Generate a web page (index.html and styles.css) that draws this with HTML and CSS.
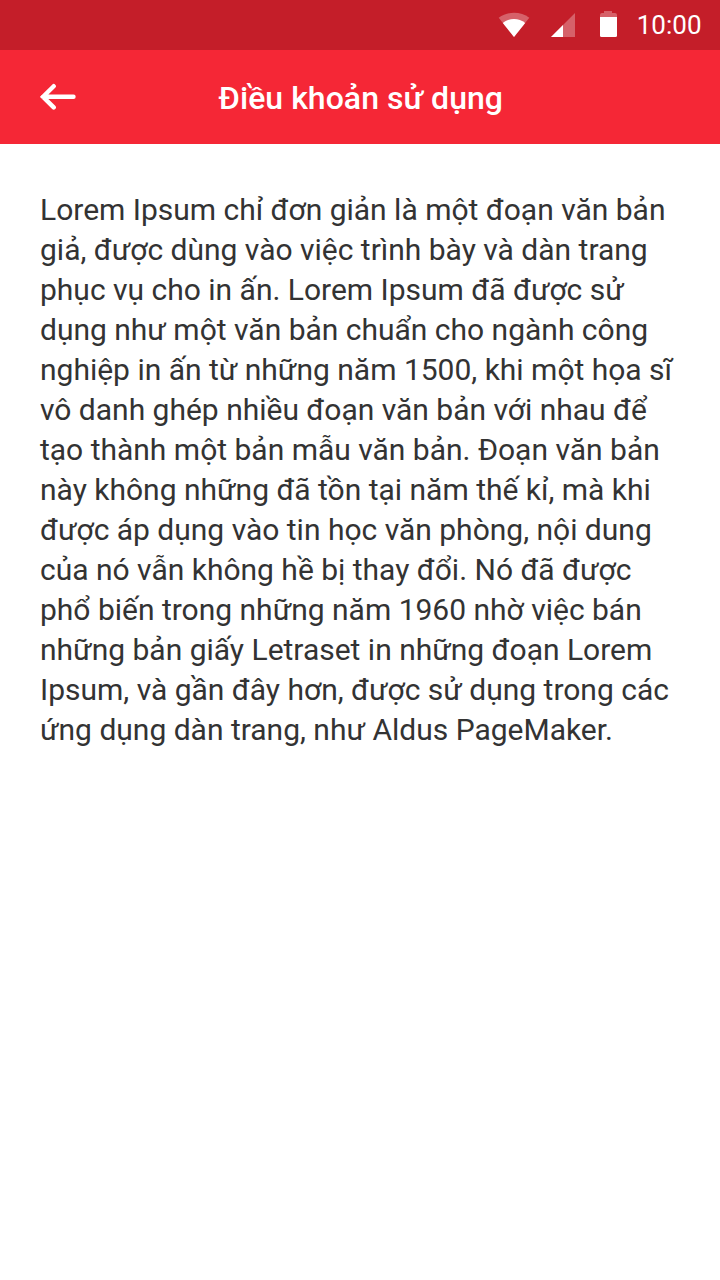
FILE: index.html
```html
<!DOCTYPE html>
<html lang="vi">
<head>
<meta charset="utf-8">
<title>Điều khoản sử dụng</title>
<link rel="stylesheet" href="styles.css">
</head>
<body>
<div class="status-bar">
  <svg class="status-icons" width="120" height="50" viewBox="498 0 120 50">
    <path class="dim" d="M514 37L498.700 17.800C503 14.500 508.500 12.800 514 12.800S525 14.500 529.300 17.800Z"/>
    <path class="solid" d="M514 37L502.800 23C506 20.300 510 19 514 19S522 20.300 525.200 23Z"/>
    <path class="dim" d="M551 37L575 13V37Z"/>
    <path class="solid" d="M551 37L563 25V37Z"/>
    <path class="dim" d="M604 11H612V13H615Q617 13 617 15V17H600V15Q600 13 602 13H604Z"/>
    <path class="solid" d="M600 17H617V35.500Q617 37 615.500 37H601.500Q600 37 600 35.500Z"/>
  </svg>
  <span class="clock">10:00</span>
</div>
<header class="app-bar">
  <svg class="back" width="36" height="28" viewBox="0 0 36 28">
    <path d="M13.700 3.200L3 13.800L13.700 24.400M3 13.800H33.500"/>
  </svg>
  <h1 class="title">Điều khoản sử dụng</h1>
</header>
<main class="terms">
  <p>Lorem Ipsum chỉ đơn giản là một đoạn văn bản<br>giả, được dùng vào việc trình bày và dàn trang<br>phục vụ cho in ấn. Lorem Ipsum đã được sử<br>dụng như một văn bản chuẩn cho ngành công<br>nghiệp in ấn từ những năm 1500, khi một họa sĩ<br>vô danh ghép nhiều đoạn văn bản với nhau để<br>tạo thành một bản mẫu văn bản. Đoạn văn bản<br>này không những đã tồn tại năm thế kỉ, mà khi<br>được áp dụng vào tin học văn phòng, nội dung<br>của nó vẫn không hề bị thay đổi. Nó đã được<br>phổ biến trong những năm 1960 nhờ việc bán<br>những bản giấy Letraset in những đoạn Lorem<br>Ipsum, và gần đây hơn, được sử dụng trong các<br>ứng dụng dàn trang, như Aldus PageMaker.</p>
</main>
</body>
</html>
```
FILE: styles.css
```css
body {
  margin: 0;
  min-height: 1280px;
  background: #fff;
  font-family: Roboto, "Noto Sans", sans-serif;
}
.status-bar {
  display: flex;
  justify-content: flex-end;
  align-items: center;
  height: 50px;
  padding-right: 18.5px;
  box-sizing: border-box;
  background: #c41e29;
  color: #fff;
}
.status-icons { margin-right: 18.5px; }
.solid { fill: #fff; }
.dim { fill: #fff; fill-opacity: .3; }
.clock { font-size: 26px; line-height: 50px; }
.app-bar {
  display: grid;
  grid-template-columns: 36px 1fr 36px;
  align-items: center;
  height: 94px;
  padding: 0 40px;
  background: #f52736;
  color: #fff;
}
.back {
  fill: none;
  stroke: #fff;
  stroke-width: 4.4;
  stroke-linecap: round;
  stroke-linejoin: miter;
}
.title {
  margin: 2px 0 0;
  padding-left: 1.6px;
  text-align: center;
  font-size: 32px;
  line-height: 40px;
  font-weight: 500;
  letter-spacing: .03px;
}
.terms { padding: 46px 40px; }
.terms p {
  margin: 0;
  font-size: 30px;
  line-height: 40px;
  letter-spacing: -.005px;
  color: #333;
  white-space: nowrap;
}
```
